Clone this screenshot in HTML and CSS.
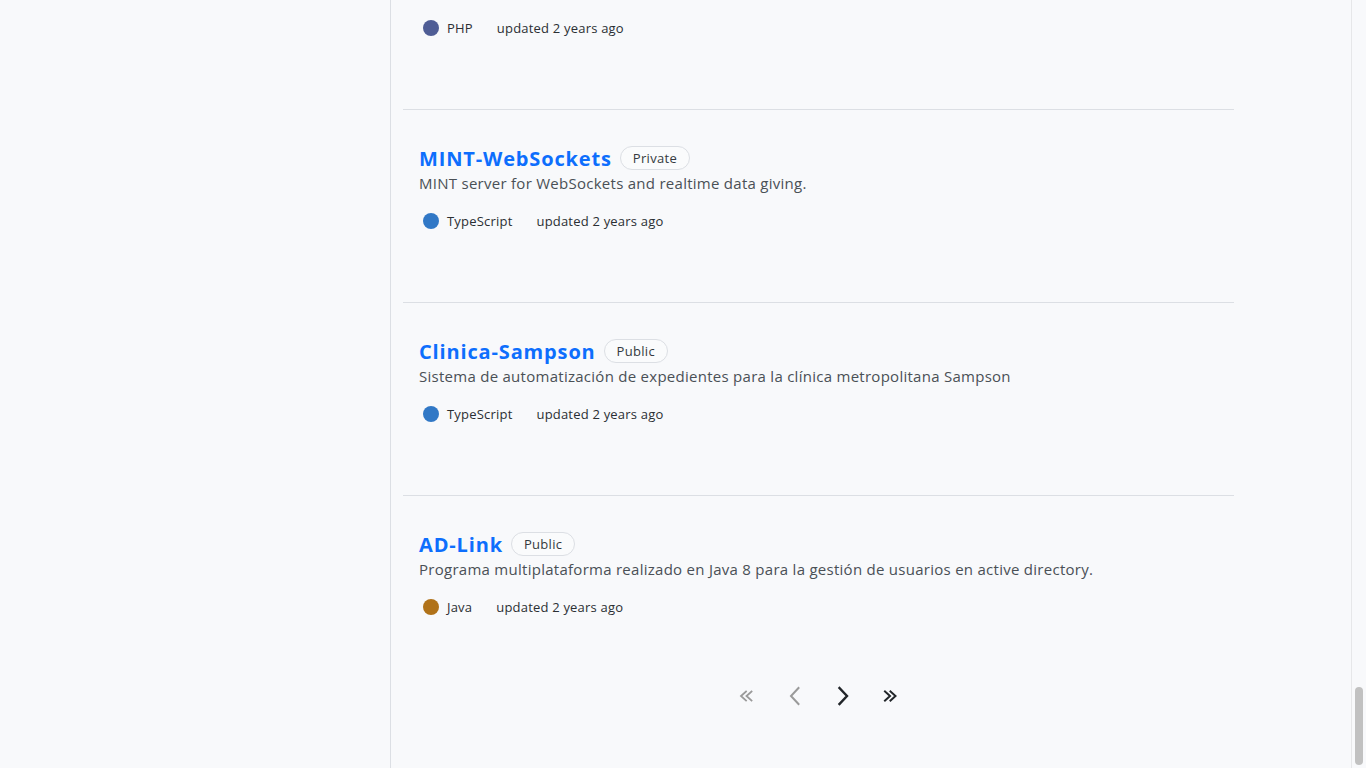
FILE: index.html
```html
<!DOCTYPE html>
<html lang="en">
<head>
<meta charset="utf-8">
<title>Repositories</title>
<link rel="stylesheet" href="styles.css">
</head>
<body>
<div class="layout">
  <aside class="sidebar"></aside>
  <main class="main">
    <div class="repos">
      <div class="repo repo-partial">
        <div class="meta">
          <span class="lang"><span class="dot dot-php"></span>PHP</span>
          <span class="updated">updated 2 years ago</span>
        </div>
      </div>
      <div class="repo">
        <div class="repo-head">
          <a class="repo-name" href="#">MINT-WebSockets</a>
          <span class="badge">Private</span>
        </div>
        <p class="desc">MINT server for WebSockets and realtime data giving.</p>
        <div class="meta">
          <span class="lang"><span class="dot dot-ts"></span>TypeScript</span>
          <span class="updated">updated 2 years ago</span>
        </div>
      </div>
      <div class="repo">
        <div class="repo-head">
          <a class="repo-name" href="#">Clinica-Sampson</a>
          <span class="badge">Public</span>
        </div>
        <p class="desc">Sistema de automatización de expedientes para la clínica metropolitana Sampson</p>
        <div class="meta">
          <span class="lang"><span class="dot dot-ts"></span>TypeScript</span>
          <span class="updated">updated 2 years ago</span>
        </div>
      </div>
      <div class="repo repo-last">
        <div class="repo-head">
          <a class="repo-name" href="#">AD-Link</a>
          <span class="badge">Public</span>
        </div>
        <p class="desc">Programa multiplataforma realizado en Java 8 para la gestión de usuarios en active directory.</p>
        <div class="meta">
          <span class="lang"><span class="dot dot-java"></span>Java</span>
          <span class="updated">updated 2 years ago</span>
        </div>
      </div>
      <nav class="pager">
        <span class="pg pg-disabled">
          <svg width="24" height="24" viewBox="0 0 24 24" fill="none" stroke="currentColor" stroke-width="1.8" stroke-linecap="square" stroke-linejoin="miter"><path d="M11 7.5 L6 12 L11 16.5"/><path d="M16.5 7.5 L11.5 12 L16.5 16.5"/></svg>
        </span>
        <span class="pg pg-disabled">
          <svg width="24" height="24" viewBox="0 0 24 24" fill="none" stroke="currentColor" stroke-width="2" stroke-linecap="square" stroke-linejoin="miter"><path d="M15.5 4 L8 12 L15.5 20"/></svg>
        </span>
        <span class="pg">
          <svg width="24" height="24" viewBox="0 0 24 24" fill="none" stroke="currentColor" stroke-width="2.4" stroke-linecap="square" stroke-linejoin="miter"><path d="M8.5 4 L16 12 L8.5 20"/></svg>
        </span>
        <span class="pg">
          <svg width="24" height="24" viewBox="0 0 24 24" fill="none" stroke="currentColor" stroke-width="2" stroke-linecap="square" stroke-linejoin="miter"><path d="M6 7.5 L11 12 L6 16.5"/><path d="M11.5 7.5 L16.5 12 L11.5 16.5"/></svg>
        </span>
      </nav>
    </div>
  </main>
  <div class="scrollbar"><div class="thumb"></div></div>
</div>
</body>
</html>
```
FILE: styles.css
```css
* { box-sizing: border-box; }
html, body {
  margin: 0;
  padding: 0;
  height: 100%;
  overflow: hidden;
}
body {
  background: #f8f9fb;
  font-family: "Open Sans", "Noto Sans", sans-serif;
  color: #212529;
}
.layout {
  display: flex;
  height: 768px;
}
.sidebar {
  width: 391px;
  flex: none;
  border-right: 1px solid #dcdfe4;
}
.main {
  flex: 1;
  padding: 0 116px 0 12px;
}
.repos {
  width: 831px;
}
.repo {
  padding: 36px 16px 71px;
  border-bottom: 1px solid #dcdfe4;
}
.repo-partial {
  padding: 18px 16px 71px;
}
.repo-last {
  border-bottom: none;
  padding-bottom: 0;
}
.repo-head {
  display: flex;
  align-items: center;
  gap: 8px;
  height: 24px;
}
.repo-name {
  color: #0d6efd;
  text-decoration: none;
  font-size: 20px;
  font-weight: 700;
  letter-spacing: 0.85px;
}
.badge {
  display: inline-flex;
  align-items: center;
  height: 24px;
  padding: 0 12px;
  border: 1px solid #dcdfe4;
  border-radius: 12px;
  font-size: 13px;
  letter-spacing: 0.3px;
  color: #343a40;
  background: #fafbfc;
}
.desc {
  margin: 3px 0 0;
  font-size: 15px;
  line-height: 20px;
  color: #4a5056;
  letter-spacing: 0.27px;
}
.meta {
  margin-top: 18px;
  display: flex;
  align-items: center;
  gap: 24px;
  height: 20px;
  padding-left: 4px;
  font-size: 13px;
  letter-spacing: 0.2px;
  color: #2b2f33;
}
.repo-partial .meta { margin-top: 0; }
.lang {
  display: inline-flex;
  align-items: center;
  gap: 8px;
}
.dot {
  width: 16px;
  height: 16px;
  border-radius: 50%;
  display: inline-block;
}
.dot-php { background: #4f5d95; }
.dot-ts { background: #3178c6; }
.dot-java { background: #b07219; }
.pager {
  display: flex;
  justify-content: center;
  gap: 24px;
  margin-top: 67px;
}
.pg {
  width: 24px;
  height: 24px;
  display: inline-flex;
  color: #212529;
}
.pg-disabled { color: #9a9a9a; }
.scrollbar {
  width: 15px;
  flex: none;
  border-left: 1px solid #e6e7e9;
  background: #f8f9fb;
  position: relative;
}
.thumb {
  position: absolute;
  left: 3px;
  width: 8px;
  top: 687px;
  height: 78px;
  border-radius: 4px;
  background: #c1c1c1;
}
```
